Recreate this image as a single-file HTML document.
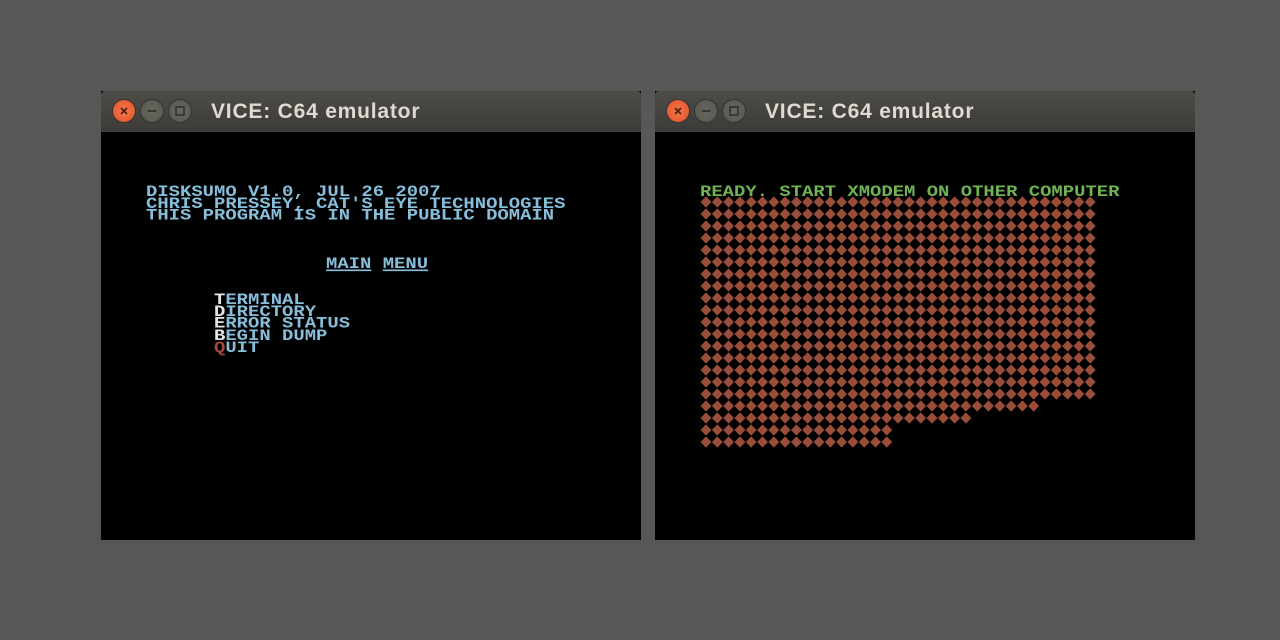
<!DOCTYPE html>
<html><head><meta charset="utf-8"><style>
body{margin:0;width:1280px;height:640px;background:#575757;position:relative;overflow:hidden;font-family:"Liberation Sans",sans-serif}
.win{position:absolute;top:91px;width:540px;height:449px;background:#000}
.tb{position:absolute;left:0;top:0;width:540px;height:41px;background:linear-gradient(#4d4c47,#3c3b37);border-radius:4px 4px 0 0}
.tt{position:absolute;left:110px;top:9px;color:#dfdbd2;font-size:21px;font-weight:bold;letter-spacing:0.8px}
.b{position:absolute;top:9px;width:22px;height:22px;border-radius:50%;background:radial-gradient(#68675f,#56554f);box-shadow:0 0 0 1px #35342f}
.b.c{background:radial-gradient(#f7774a,#e0512a)}
.t{position:absolute;font-family:"Liberation Mono",monospace;font-weight:bold;font-size:18.9px;line-height:14.63px;white-space:pre;transform:scaleY(0.82);transform-origin:0 0;letter-spacing:0}
.lb{color:#86bedb}.w{color:#e6e6e6}.r{color:#a8493a}.g{color:#6fb453}
u{text-decoration-thickness:2px;text-underline-offset:2px}
</style></head><body>
<div class="win" style="left:101px">
 <div class="tb">
  <div class="b c" style="left:12px"><svg width="22" height="22"><path d="M8 8L14 14M14 8L8 14" stroke="#4a1e10" stroke-width="1.6"/></svg></div>
  <div class="b" style="left:40px"><svg width="22" height="22"><path d="M6.5 11H15.5" stroke="#2f2e2a" stroke-width="1.6"/></svg></div>
  <div class="b" style="left:68px"><svg width="22" height="22"><rect x="7" y="7" width="8" height="8" fill="none" stroke="#2f2e2a" stroke-width="1.5"/></svg></div>
  <div class="tt">VICE: C64 emulator</div>
 </div>
 <div class="t lb" style="left:45px;top:95px">DISKSUMO V1.0, JUL 26 2007
CHRIS PRESSEY, CAT'S EYE TECHNOLOGIES
THIS PROGRAM IS IN THE PUBLIC DOMAIN</div>
 <div class="t lb" style="left:225px;top:167px"><u>MAIN</u> <u>MENU</u></div>
 <div class="t lb" style="left:113px;top:203px"><span class="w">T</span>ERMINAL
<span class="w">D</span>IRECTORY
<span class="w">E</span>RROR STATUS
<span class="w">B</span>EGIN DUMP
<span class="r">Q</span>UIT</div>
</div>
<div class="win" style="left:655px">
 <div class="tb">
  <div class="b c" style="left:12px"><svg width="22" height="22"><path d="M8 8L14 14M14 8L8 14" stroke="#4a1e10" stroke-width="1.6"/></svg></div>
  <div class="b" style="left:40px"><svg width="22" height="22"><path d="M6.5 11H15.5" stroke="#2f2e2a" stroke-width="1.6"/></svg></div>
  <div class="b" style="left:68px"><svg width="22" height="22"><rect x="7" y="7" width="8" height="8" fill="none" stroke="#2f2e2a" stroke-width="1.5"/></svg></div>
  <div class="tt">VICE: C64 emulator</div>
 </div>
 <div class="t g" style="left:45px;top:95px">READY. START XMODEM ON OTHER COMPUTER</div>
</div>
<svg style="position:absolute;left:0;top:0" width="1280" height="640">
 <defs><pattern id="p" patternUnits="userSpaceOnUse" x="700.35" y="196" width="11.3" height="12">
  <polygon points="5.65,0.4 11.1,6 5.65,11.6 0.2,6" fill="#9a4e3a"/></pattern></defs>
 <rect x="700.35" y="196" width="395.5" height="204" fill="url(#p)"/>
 <rect x="700.35" y="400" width="339" height="12" fill="url(#p)"/>
 <rect x="700.35" y="412" width="271.2" height="12" fill="url(#p)"/>
 <rect x="700.35" y="424" width="192.1" height="24" fill="url(#p)"/>
</svg>
</body></html>
